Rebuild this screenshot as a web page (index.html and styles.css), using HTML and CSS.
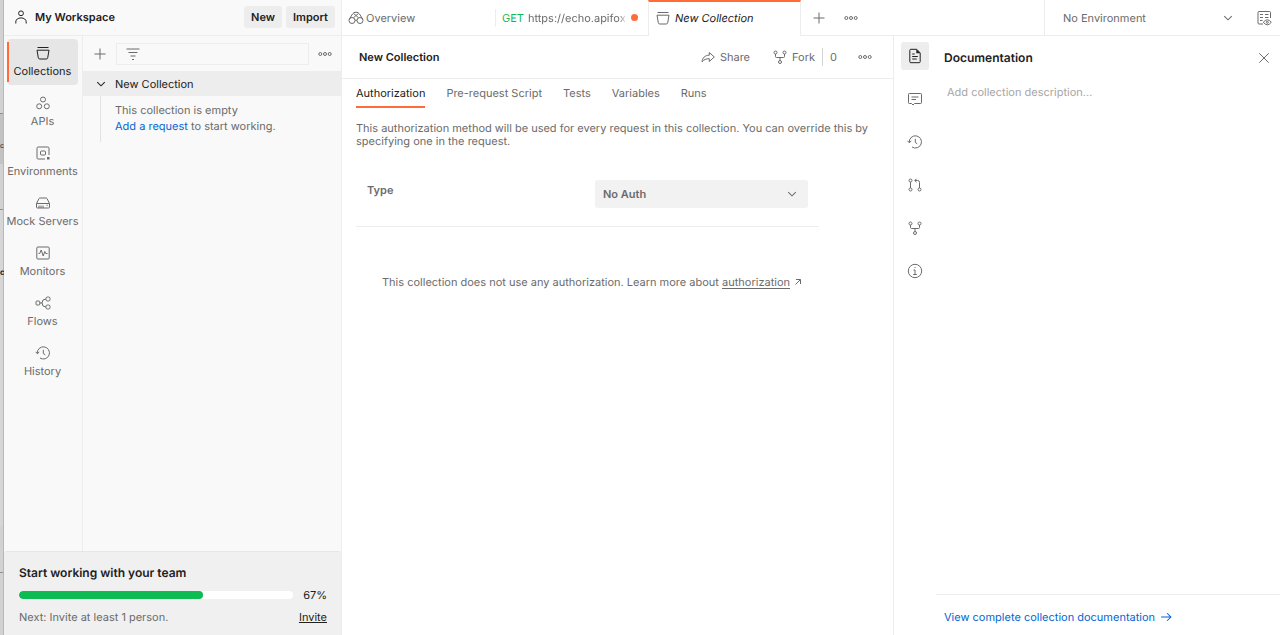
FILE: index.html
```html
<!DOCTYPE html>
<html lang="en">
<head>
    <meta charset="UTF-8">
    <meta name="viewport" content="width=device-width, initial-scale=1.0">
    <title>New Collection - My Workspace</title>
    <link rel="stylesheet" href="styles.css">
</head>
<body>
    <!-- Icon set -->
    <svg class="sprite" aria-hidden="true">
        <symbol id="i-user" viewBox="0 0 16 16"><circle cx="8" cy="4.3" r="2.4"/><path d="M2.8 14.5v-1.6c0-2.4 2.2-4 5.2-4s5.2 1.6 5.2 4v1.6"/></symbol>
        <symbol id="i-box" viewBox="0 0 16 16"><path d="M2.5 2.5h11M2 5.2h12l-1.3 7.6a1.5 1.5 0 0 1-1.5 1.2H4.800a1.500 1.500 0 0 1-1.500-1.200z"/></symbol>
        <symbol id="i-api" viewBox="0 0 16 16"><circle cx="8" cy="4.5" r="2.5"/><circle cx="4.2" cy="11.3" r="2.5"/><circle cx="11.8" cy="11.3" r="2.5"/></symbol>
        <symbol id="i-env" viewBox="0 0 16 16"><path d="M10 14H3.2A1.2 1.2 0 0 1 2 12.8V3.2A1.2 1.2 0 0 1 3.2 2h9.600A1.200 1.200 0 0 1 14 3.200V10"/><rect x="5.500" y="6" width="5" height="4" rx="1"/><path class="solid" d="M12 12h2.500v2.500H12z"/></symbol>
        <symbol id="i-mock" viewBox="0 0 16 16"><path d="M1.500 8.500 4 3.500q.3-.5 1-.5h6q.7 0 1 .5l2.500 5M1.500 8.500h13v3.700q0 .8-.8.800H2.300q-.8 0-.8-.8zM4 10.500V13M6 10.500V13M8 10.500V13M11.500 10.300h1.200"/></symbol>
        <symbol id="i-monitor" viewBox="0 0 16 16"><rect x="1.800" y="2" width="12.400" height="12" rx="1"/><path d="M3.500 8.500h1.200L6.200 5l2 6 1.600-4.500 1 2h1.700"/></symbol>
        <symbol id="i-flow" viewBox="0 0 16 16"><rect x="1" y="6" width="3.800" height="4" rx="1"/><rect x="11" y="2" width="4" height="4" rx="1.500"/><rect x="11" y="10" width="4" height="4" rx="1.500"/><path d="M4.800 8H7M11 4q-4 0-4 4t4 4"/></symbol>
        <symbol id="i-history" viewBox="0 0 16 16"><path d="M2.300 8.500A6.100 6.100 0 1 1 5 13M.6 6.800l1.700 1.900L4.300 7M8.300 4.800v3.700l2 1.300"/></symbol>
        <symbol id="i-plus" viewBox="0 0 16 16"><path d="M8 2.500v11M2.500 8h11"/></symbol>
        <symbol id="i-filter" viewBox="0 0 16 16"><path d="M1.500 3h13M3.500 6.500h9M5.500 10h5M7 13.500h2"/></symbol>
        <symbol id="i-more" viewBox="0 0 16 16"><circle cx="3.300" cy="8" r="1.500"/><circle cx="8" cy="8" r="1.500"/><circle cx="12.700" cy="8" r="1.500"/></symbol>
        <symbol id="i-down" viewBox="0 0 16 16"><path d="m3 5.500 5 5 5-5"/></symbol>
        <symbol id="i-overview" viewBox="0 0 16 16"><circle cx="4" cy="10.500" r="3"/><circle cx="12" cy="10.500" r="3"/><path d="M1.200 9.300 4.500 4q1-1.800 3.500-1.800T11.500 4l3.300 5.300M7 10.500q1-1 2 0M5.500 7.800 8 5.500l2.500 2.300M5.500 3.500 8 5.500l2.500-2"/></symbol>
        <symbol id="i-share" viewBox="0 0 16 16"><path d="M9.300 3.500v2.700C5 6.200 2.300 9 2 12.800 3.800 10.700 6 9.700 9.300 9.700v2.800L14.300 8z"/></symbol>
        <symbol id="i-fork" viewBox="0 0 16 16"><circle cx="3.500" cy="3.500" r="1.500"/><circle cx="12.500" cy="3.500" r="1.500"/><circle cx="8" cy="13" r="1.500"/><path d="M3.500 5v2.500q0 1 1 1h7q1 0 1-1V5M8 8.500v3"/></symbol>
        <symbol id="i-eye" viewBox="0 0 16 16"><path d="M7 14H3q-1 0-1-1V2.500q0-1 1-1h10.500q1 0 1 1V8M4 4.500h3M4 7.500h3M4 10.500h2.500M9 4.500h3.500M9 7.500h3.500M7.300 12.300q4-5 8 0-4 5-8 0z"/><circle cx="11.300" cy="12.300" r="1"/></symbol>
        <symbol id="i-doc" viewBox="0 0 16 16"><path d="M9.800 1.300H3.800q-1 0-1 1v11.400q0 1 1 1h8.400q1 0 1-1V5zM5.200 6h2.500M5.200 8.500h5.600M5.200 11h4.500"/><path class="solid" d="M9.300 1.300v4h4z"/></symbol>
        <symbol id="i-comment" viewBox="0 0 16 16"><path d="M2.300 2.500h11.400q.8 0 .8.800v8.400q0 .8-.8.800H7.500L6 14l-1.500-1.500H2.300q-.8 0-.8-.8V3.300q0-.8.8-.8zM4.500 6h7M4.500 8.500h4.500"/></symbol>
        <symbol id="i-pull" viewBox="0 0 16 16"><circle cx="3.500" cy="3.500" r="1.500"/><circle cx="3.500" cy="12.500" r="1.500"/><circle cx="12.500" cy="12.500" r="1.500"/><path d="M3.500 5v6M12.500 11V5.500q0-2-2-2H7.800M9.500 1.800 7.800 3.500l1.700 1.700"/></symbol>
        <symbol id="i-info" viewBox="0 0 16 16"><circle cx="8" cy="8" r="6.700"/><path d="M6.500 7H8v4.500M6.200 11.500h3.600M7.500 4.500h1"/></symbol>
        <symbol id="i-close" viewBox="0 0 16 16"><path d="m3.300 3.300 9.400 9.400M12.700 3.300l-9.400 9.400"/></symbol>
        <symbol id="i-out" viewBox="0 0 16 16"><path d="m3 13 9.500-9.500M4 3h9v9"/></symbol>
        <symbol id="i-right" viewBox="0 0 16 16"><path d="M1.500 8h13M9.500 3l5 5-5 5"/></symbol>
    </svg>

    <!-- Edge of the window behind -->
    <div class="backdrop">
        <div class="backdrop-top"></div>
        <div class="backdrop-tab"><span>c</span></div>
        <div class="backdrop-row"></div>
        <div class="backdrop-body"><b>c</b></div>
        <div class="backdrop-row"></div>
        <div class="backdrop-end"></div>
    </div>

    <aside class="sidebar">
        <header class="workspace">
            <svg class="icon"><use href="#i-user"/></svg>
            <h2>My Workspace</h2>
            <button class="btn">New</button>
            <button class="btn">Import</button>
        </header>

        <div class="sidebar-body">
            <nav class="rail">
                <a href="#" class="active"><svg class="icon"><use href="#i-box"/></svg>Collections</a>
                <a href="#"><svg class="icon"><use href="#i-api"/></svg>APIs</a>
                <a href="#"><svg class="icon"><use href="#i-env"/></svg>Environments</a>
                <a href="#"><svg class="icon"><use href="#i-mock"/></svg>Mock Servers</a>
                <a href="#"><svg class="icon"><use href="#i-monitor"/></svg>Monitors</a>
                <a href="#"><svg class="icon"><use href="#i-flow"/></svg>Flows</a>
                <a href="#"><svg class="icon"><use href="#i-history"/></svg>History</a>
            </nav>

            <div class="collections">
                <div class="filter-row">
                    <button class="icon-btn" aria-label="Create collection"><svg class="icon"><use href="#i-plus"/></svg></button>
                    <label class="filter">
                        <svg class="icon"><use href="#i-filter"/></svg>
                        <input type="text" aria-label="Filter collections">
                    </label>
                    <button class="icon-btn" aria-label="More actions"><svg class="icon"><use href="#i-more"/></svg></button>
                </div>
                <button class="collection"><svg class="icon small"><use href="#i-down"/></svg>New Collection</button>
                <div class="empty">
                    <p>This collection is empty</p>
                    <p><a href="#">Add a request</a> to start working.</p>
                </div>
            </div>
        </div>

        <footer class="team">
            <h3>Start working with your team</h3>
            <div class="team-row">
                <div class="bar"><div class="bar-fill" style="width: 67%"></div></div>
                <span class="percent">67%</span>
            </div>
            <div class="team-row">
                <p>Next: Invite at least 1 person.</p>
                <a href="#">Invite</a>
            </div>
        </footer>
    </aside>

    <div class="workbench">
        <header class="topbar">
            <div class="tabs">
                <a href="#" class="tab"><svg class="icon"><use href="#i-overview"/></svg>Overview</a>
                <a href="#" class="tab request"><span class="method">GET</span><span class="url">https://echo.apifox.c</span><span class="dot"></span></a>
                <a href="#" class="tab active"><svg class="icon"><use href="#i-box"/></svg><em>New Collection</em></a>
            </div>
            <div class="tab-actions">
                <button class="icon-btn" aria-label="New tab"><svg class="icon"><use href="#i-plus"/></svg></button>
                <button class="icon-btn" aria-label="Tab options"><svg class="icon"><use href="#i-more"/></svg></button>
            </div>
            <div class="environment">
                <div class="select">
                    <select aria-label="Environment"><option>No Environment</option></select>
                    <svg class="icon small"><use href="#i-down"/></svg>
                </div>
                <button class="icon-btn" aria-label="Environment quick look"><svg class="icon"><use href="#i-eye"/></svg></button>
            </div>
        </header>

        <div class="content">
            <main>
                <div class="title-row">
                    <h1>New Collection</h1>
                    <button class="action"><svg class="icon"><use href="#i-share"/></svg>Share</button>
                    <button class="action fork"><svg class="icon"><use href="#i-fork"/></svg>Fork</button>
                    <button class="count" aria-label="Forks">0</button>
                    <button class="icon-btn" aria-label="More actions"><svg class="icon"><use href="#i-more"/></svg></button>
                </div>

                <nav class="sections">
                    <a href="#" class="active">Authorization</a>
                    <a href="#">Pre-request Script</a>
                    <a href="#">Tests</a>
                    <a href="#">Variables</a>
                    <a href="#">Runs</a>
                </nav>

                <section class="auth">
                    <p class="intro">This authorization method will be used for every request in this collection. You can override this by specifying one in the request.</p>
                    <div class="auth-type">
                        <label for="authType">Type</label>
                        <div class="select filled">
                            <select id="authType"><option>No Auth</option></select>
                            <svg class="icon small"><use href="#i-down"/></svg>
                        </div>
                    </div>
                    <p class="note">This collection does not use any authorization. Learn more about <a href="#">authorization</a><svg class="icon tiny"><use href="#i-out"/></svg></p>
                </section>
            </main>

            <aside class="details">
                <nav class="tools">
                    <button class="active" aria-label="Documentation"><svg class="icon"><use href="#i-doc"/></svg></button>
                    <button aria-label="Comments"><svg class="icon"><use href="#i-comment"/></svg></button>
                    <button aria-label="Changelog"><svg class="icon"><use href="#i-history"/></svg></button>
                    <button aria-label="Pull requests"><svg class="icon"><use href="#i-pull"/></svg></button>
                    <button aria-label="Forks"><svg class="icon"><use href="#i-fork"/></svg></button>
                    <button aria-label="Info"><svg class="icon"><use href="#i-info"/></svg></button>
                </nav>
                <div class="docs">
                    <header>
                        <h2>Documentation</h2>
                        <button class="icon-btn" aria-label="Close"><svg class="icon"><use href="#i-close"/></svg></button>
                    </header>
                    <textarea placeholder="Add collection description..." aria-label="Collection description"></textarea>
                    <footer><a href="#">View complete collection documentation<svg class="icon small"><use href="#i-right"/></svg></a></footer>
                </div>
            </aside>
        </div>
    </div>
</body>
</html>
```
FILE: styles.css
```css
* {
    margin: 0;
    padding: 0;
    box-sizing: border-box;
}

body {
    display: flex;
    height: 100vh;
    overflow: hidden;
    font-family: Inter, sans-serif;
    font-size: 11px;
    line-height: 16px;
    text-rendering: geometricPrecision;
    color: #6b6b6b;
    background: #fff;
}

a {
    color: inherit;
    text-decoration: none;
}

button,
input,
select,
textarea {
    font: inherit;
    color: inherit;
    text-rendering: inherit;
    border: none;
    background: none;
    outline: none;
}

button {
    cursor: pointer;
}

h1,
h2,
h3 {
    font-size: 11px;
    font-weight: 600;
    color: #212121;
}

.sprite {
    position: absolute;
    width: 0;
    height: 0;
}

.icon {
    flex: none;
    display: block;
    width: 16px;
    height: 16px;
    fill: none;
    stroke: currentColor;
    stroke-width: 1;
}

.icon.small {
    width: 12px;
    height: 12px;
    stroke-width: 1.4;
}

.icon.tiny {
    display: inline-block;
    width: 8px;
    height: 8px;
    margin-left: 4px;
    stroke-width: 2;
}

.solid {
    fill: currentColor;
    stroke: none;
}

.icon-btn {
    flex: none;
    display: flex;
    align-items: center;
    justify-content: center;
    width: 32px;
    height: 24px;
}

/* Window edge */
.backdrop {
    flex: none;
    display: flex;
    flex-direction: column;
    width: 4px;
    background: #d2d2d2;
    border-right: 1px solid #b8b8b8;
    color: #212121;
}

.backdrop-top {
    height: 114px;
    border-bottom: 1px solid #909090;
}

.backdrop-tab {
    height: 50px;
    padding-top: 24px;
    font-size: 7px;
    background: #c2c2c2;
}

.backdrop-row {
    height: 46px;
    border-bottom: 1px solid #909090;
}

.backdrop-body {
    height: 317px;
    padding-top: 54px;
    font-size: 8px;
    background: #d6d6d6;
}

.backdrop-end {
    flex: 1;
}

/* Sidebar */
.sidebar {
    flex: none;
    display: flex;
    flex-direction: column;
    width: 338px;
    background: #f9f9f9;
    border-right: 1px solid #ededed;
}

.workspace {
    display: flex;
    align-items: center;
    gap: 4px;
    height: 36px;
    padding: 0 6px 1px 9px;
    border-bottom: 1px solid #ededed;
}

.workspace .icon {
    color: #212121;
    margin-right: 2px;
}

.workspace h2 {
    flex: 1;
}

.btn {
    height: 22px;
    padding: 0 7px;
    font-weight: 600;
    color: #212121;
    background: #ededed;
    border-radius: 3px;
}

.sidebar-body {
    flex: 1;
    display: flex;
}

.rail {
    flex: none;
    display: flex;
    flex-direction: column;
    gap: 4px;
    width: 79px;
    padding: 3px 4px 0 3px;
    border-right: 1px solid #ededed;
}

.rail a {
    display: flex;
    flex-direction: column;
    align-items: center;
    gap: 2px;
    height: 46px;
    padding-top: 6px;
    border-radius: 4px;
    white-space: nowrap;
}

.rail .active {
    position: relative;
    color: #212121;
    background: #e6e6e6;
}

.rail .active::before {
    content: "";
    position: absolute;
    left: 0;
    top: 3px;
    bottom: 3px;
    width: 2px;
    background: #ff6c37;
}

.collections {
    flex: 1;
    min-width: 0;
}

.filter-row {
    display: flex;
    align-items: center;
    height: 35px;
    padding-left: 1px;
}

.filter {
    flex: 1;
    display: flex;
    align-items: center;
    gap: 8px;
    min-width: 0;
    height: 22px;
    padding: 0 8px;
    border: 1px solid #ededed;
}

.filter input {
    flex: 1;
    min-width: 0;
}

.collection {
    display: flex;
    align-items: center;
    gap: 8px;
    width: 100%;
    height: 25px;
    padding-left: 12px;
    color: #212121;
    background: #ededed;
}

.empty {
    margin-left: 17px;
    padding: 6px 0 8px 14px;
    border-left: 1px solid #e2e2e2;
}

.empty a,
.docs footer a {
    color: #0265d2;
}

.team {
    display: flex;
    flex-direction: column;
    gap: 6px;
    height: 84px;
    padding: 13px 14px 0 15px;
    background: #f0f0f0;
    border-top: 1px solid #e6e6e6;
    border-radius: 3px 3px 0 0;
}

.team h3,
.docs h2 {
    font-size: 12px;
}

.team-row {
    display: flex;
    align-items: center;
    justify-content: space-between;
    gap: 10px;
}

.bar {
    flex: 1;
    height: 8px;
    background: #fff;
    border-radius: 4px;
    overflow: hidden;
}

.bar-fill {
    height: 100%;
    background: #0cbb52;
    border-radius: 4px;
}

.percent,
.team a {
    color: #212121;
}

.team a,
.note a {
    text-decoration: underline;
}

/* Workbench */
.workbench {
    flex: 1;
    display: flex;
    flex-direction: column;
    min-width: 0;
}

.topbar {
    flex: none;
    display: flex;
    height: 36px;
    box-shadow: inset 0 -1px #ededed;
}

.tabs {
    display: flex;
}

.tab {
    display: flex;
    align-items: center;
    gap: 2px;
    width: 153px;
    padding: 0 7px 1px 6px;
    white-space: nowrap;
}

.request {
    gap: 4px;
    padding: 0 10px 1px 7px;
    background: linear-gradient(#ededed, #ededed) 0 50% / 1px 18px no-repeat;
}

.method {
    color: #0cbb52;
}

.url {
    flex: 1;
    min-width: 0;
    overflow: hidden;
    mask-image: linear-gradient(to right, #000 92%, transparent);
}

.dot {
    flex: none;
    width: 7px;
    height: 7px;
    border-radius: 50%;
    background: #ff6c37;
}

.tab.active {
    gap: 4px;
    padding-bottom: 2px;
    color: #212121;
    background: #fff;
    border: 1px solid #ededed;
    border-top: 2px solid #ff6c37;
    border-bottom: none;
}

.tab.active .icon {
    color: #6b6b6b;
}

.tab-actions {
    flex: 1;
    display: flex;
    align-items: center;
    padding: 0 0 1px 2px;
}

.environment {
    flex: none;
    display: flex;
    align-items: center;
    width: 236px;
    padding: 0 0 1px 18px;
    border-left: 1px solid #ededed;
}

.environment .select {
    flex: 1;
}

.select {
    position: relative;
}

.select select {
    width: 100%;
    appearance: none;
}

.select .icon {
    position: absolute;
    right: 14px;
    top: 50%;
    transform: translateY(-50%);
    pointer-events: none;
}

.content {
    flex: 1;
    display: flex;
    min-height: 0;
}

main {
    flex: 1;
    min-width: 0;
}

.title-row {
    display: flex;
    align-items: center;
    height: 43px;
    padding: 0 12px 0 17px;
    border-bottom: 1px solid #ededed;
}

.title-row h1 {
    flex: 1;
}

.action {
    display: flex;
    align-items: center;
    gap: 4px;
}

.fork {
    margin-left: 22px;
}

.count {
    height: 18px;
    margin: 0 12px 0 7px;
    padding-left: 7px;
    border-left: 1px solid #d4d4d4;
}

.sections {
    display: flex;
    gap: 21px;
    padding: 6px 14px 0;
}

.sections a {
    height: 23px;
    border-bottom: 2px solid transparent;
}

.sections .active {
    color: #212121;
    border-color: #ff6c37;
}

.auth {
    padding: 14px 14px 0;
}

.intro {
    max-width: 520px;
    line-height: 13px;
}

.auth-type {
    display: flex;
    justify-content: space-between;
    max-width: 463px;
    padding: 32px 11px 18px;
    border-bottom: 1px solid #ededed;
    font-weight: 600;
}

.auth-type label {
    padding-top: 2px;
}

.filled {
    width: 213px;
    background: #f2f2f2;
    border-radius: 3px;
}

.filled select {
    height: 28px;
    padding: 0 8px;
}

.filled .icon {
    right: 10px;
}

.note {
    padding: 47px 26px;
}

.note a {
    text-underline-offset: 2px;
}

/* Documentation panel */
.details {
    flex: none;
    display: flex;
    width: 387px;
    border-left: 1px solid #ededed;
}

.tools {
    display: flex;
    flex-direction: column;
    gap: 15px;
    padding: 6px 7px;
}

.tools button {
    display: flex;
    align-items: center;
    justify-content: center;
    width: 28px;
    height: 28px;
    border-radius: 3px;
}

.tools .active {
    color: #212121;
    background: #ededed;
}

.docs {
    flex: 1;
    display: flex;
    flex-direction: column;
}

.docs header {
    display: flex;
    align-items: center;
    justify-content: space-between;
    height: 43px;
    padding-left: 8px;
}

.docs textarea {
    flex: 1;
    padding: 5px 11px;
    resize: none;
}

.docs textarea::placeholder {
    color: #a6a6a6;
}

.docs footer {
    height: 41px;
    padding: 14px 8px 0;
    border-top: 1px solid #ededed;
}

.docs footer a {
    display: flex;
    align-items: center;
    gap: 5px;
}
```
